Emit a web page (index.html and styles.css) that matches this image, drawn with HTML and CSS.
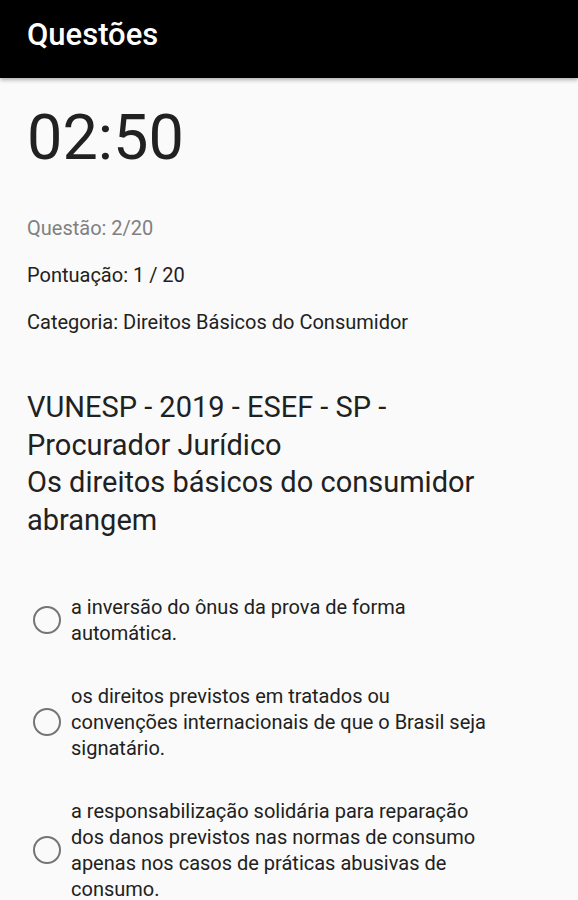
FILE: index.html
```html
<!DOCTYPE html>
<html lang="pt-BR">
<head>
    <meta charset="UTF-8">
    <meta name="viewport" content="width=device-width, initial-scale=1.0">
    <title>Questões</title>
    <link rel="stylesheet" href="styles.css">
</head>
<body>
    <!-- Toolbar -->
    <div class="toolbar">
        <span class="toolbar-title">Questões</span>
    </div>

    <div class="content">
        <div class="timer">02:50</div>

        <!-- Quiz info -->
        <p class="info info-muted">Questão: 2/20</p>
        <p class="info">Pontuação: 1 / 20</p>
        <p class="info">Categoria: Direitos Básicos do Consumidor</p>

        <h2 class="question">VUNESP - 2019 - ESEF - SP - Procurador Jurídico<br>Os direitos básicos do consumidor abrangem</h2>

        <!-- Answer options -->
        <div class="options">
            <label class="option">
                <input type="radio" name="answer">
                <span class="radio"></span>
                <span class="option-text">a inversão do ônus da prova de forma automática.</span>
            </label>
            <label class="option">
                <input type="radio" name="answer">
                <span class="radio"></span>
                <span class="option-text">os direitos previstos em tratados ou convenções internacionais de que o Brasil seja signatário.</span>
            </label>
            <label class="option">
                <input type="radio" name="answer">
                <span class="radio"></span>
                <span class="option-text">a responsabilização solidária para reparação dos danos previstos nas normas de consumo apenas nos casos de práticas abusivas de consumo.</span>
            </label>
        </div>
    </div>
</body>
</html>
```

FILE: styles.css
```css
/* Basic Reset */
* {
    margin: 0;
    padding: 0;
    box-sizing: border-box;
}

body {
    font-family: Roboto, "Noto Sans", sans-serif;
    background-color: #fafafa;
    color: #212121;
}

/* Toolbar */
.toolbar {
    height: 78px;
    background-color: #000;
    padding: 17px 27px 0;
    box-shadow: 0 2px 4px rgba(0, 0, 0, 0.3);
}

.toolbar-title {
    color: #fff;
    font-size: 31px;
    font-weight: 500;
    line-height: 36px;
}

/* Main content */
.content {
    padding: 24px 83px 0 27px;
}

.timer {
    font-size: 63px;
    line-height: 72px;
    margin-bottom: 41px;
}

.info {
    font-size: 20px;
    line-height: 26px;
    margin-bottom: 21px;
}

.info-muted {
    color: #808080;
}

.question {
    font-size: 29px;
    font-weight: 400;
    line-height: 37.5px;
    margin-top: 54px;
    margin-bottom: 55px;
}

/* Options */
.options {
    display: flex;
    flex-direction: column;
    gap: 37px;
}

.option {
    display: flex;
    align-items: center;
    gap: 10px;
    padding-left: 6px;
    cursor: pointer;
}

.option input {
    display: none;
}

.radio {
    flex-shrink: 0;
    width: 28px;
    height: 28px;
    border: 2.5px solid #757575;
    border-radius: 50%;
}

.option-text {
    font-size: 20px;
    line-height: 26px;
}
```
